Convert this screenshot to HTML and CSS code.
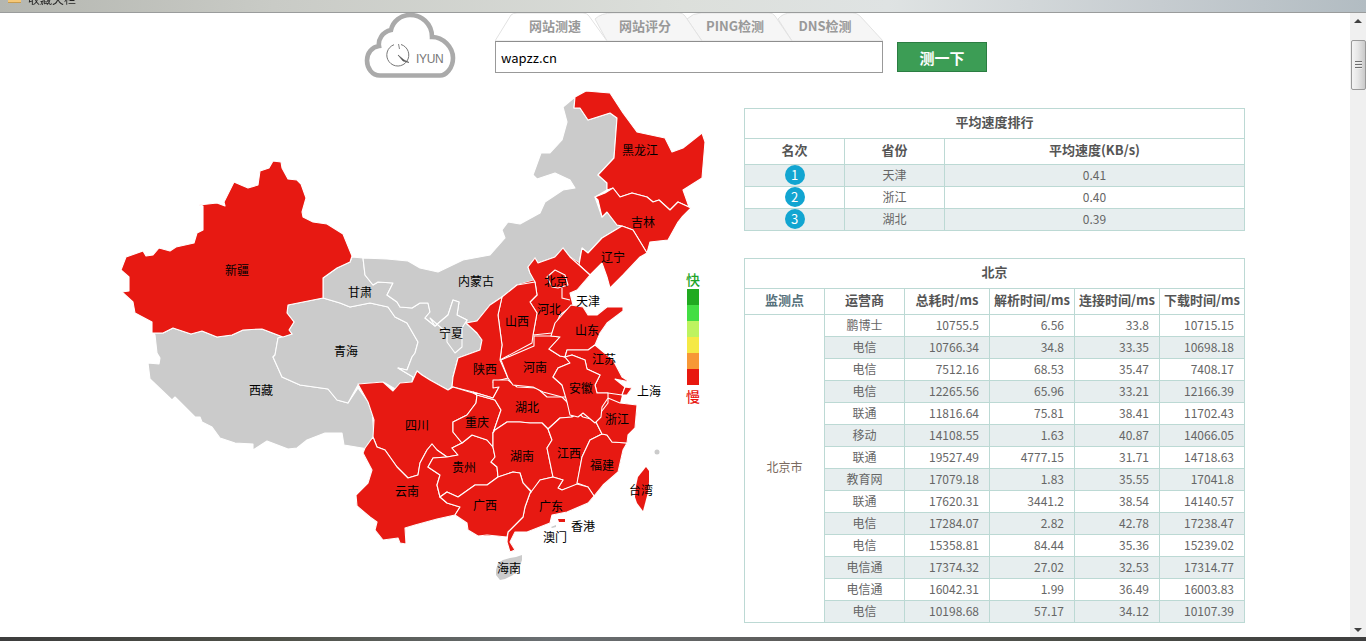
FILE: index.html
```html
<!DOCTYPE html>
<html lang="zh-CN">
<head>
<meta charset="utf-8">
<title>网站测速</title>
<link rel="stylesheet" href="styles.css">
</head>
<body>
<div class="titlebar">
  <span class="folder"></span>
  <span class="fav">收藏夹栏</span>
</div>
<div class="window">
  <main class="page">
    <header class="top">
      <svg class="logo" viewBox="360 10 100 72" width="100" height="72">
        <path class="cloud" d="M380,75.5 C372,75.5 367,68 367,60.5 C367,53 372,47 379,46 C378,40 382,32 391,30 C393,21 401,15 410,15 C421,15 432,23 432,37 C443,37 453,47 453,58 C453,68 446,75.5 440,75.5 Z"/>
        <path class="dial" d="M401,44.5 A11,11 0 1 1 394,44.7"/>
        <path class="tick" d="M398.5,44 L399.5,49"/>
        <path class="hand" d="M398,55 L404,60 L409,62.5 L403,61 Z"/>
        <text class="iyun" x="416" y="63">IYUN</text>
      </svg>
      <div class="search">
        <div class="tabs">
          <svg class="tabshape" viewBox="0 0 388 28" width="388" height="28">
            <path class="tabback" d="M297,28 L283,6 Q288,0 296,0 L358,0 Q362,0 365,3 L388,28 Z"/>
            <path class="tabback" d="M207,28 L192,6 Q198,0 206,0 L274,0 Q278,0 280,3 L297,28 Z"/>
            <path class="tabback" d="M112,28 L100,6 Q106,0 118,0 L184,0 Q188,0 190,3 L207,28 Z"/>
            <path class="tabfront" d="M0,28 L16,2 Q18,0 22,0 L88,0 Q92,0 94,3 L112,28 Z"/>
          </svg>
          <span class="tab">网站测速</span>
          <span class="tab">网站评分</span>
          <span class="tab">PING检测</span>
          <span class="tab">DNS检测</span>
        </div>
        <input class="url" type="text" value="wapzz.cn">
      </div>
      <button class="go" type="button">测一下</button>
    </header>
    <div class="content">
      <div class="mapbox">
        <svg class="map" viewBox="100 85 620 510" width="620" height="510">
          <g class="grey">
            <polygon points="153,333 163,333 173,328 191,334 202,331 217,337 232,335 243,330 262,329 283,337 278,338 275,355 273,357 282,377 300,385 328,389 337,400 348,403 358,388 372,407 374,437 368,449 344,445 342,433 325,433 307,440 297,448 288,449 267,441 253,450 253,444 235,443 220,438 212,427 202,422 200,417 195,417 175,397 172,400 150,379 148,363 159,364 160,358 157,353 155,335"/>
            <polygon points="288,305 323,298 340,303 350,307 370,303 388,307 395,317 407,323 418,342 415,353 412,357 407,370 398,368 413,377 412,383 405,383 397,390 385,383 358,385 348,403 337,400 328,389 300,385 282,377 273,357 275,355 278,338 292,334 289,330 294,322 287,313"/>
            <polygon points="352,257 363,258 365,275 373,285 378,282 393,283 387,295 397,302 400,307 412,308 420,303 428,303 430,312 425,318 435,326 448,315 453,300 459,302 457,315 467,320 466,323 477,333 482,340 480,350 458,358 453,377 452,387 448,390 430,380 422,375 417,371 412,382 413,377 398,368 407,370 412,357 415,353 418,342 407,323 395,317 388,307 370,303 350,307 340,303 323,298 323,278 337,268 350,262"/>
            <polygon points="575,97 563,107 567,122 562,140 550,153 541,153 533,175 537,179 555,173 570,180 575,188 563,190 545,202 540,213 520,224 508,222 502,230 505,238 490,255 463,260 438,272 420,268 408,261 387,259 363,258 365,275 373,285 378,282 393,283 387,295 397,302 400,307 412,308 420,303 428,303 430,312 425,318 435,326 448,315 453,300 459,302 457,315 467,320 466,323 477,321 490,305 502,297 517,285 535,280 530,273 528,267 535,258 538,263 555,257 563,248 570,257 579,263 582,248 588,253 602,238 622,226 617,225 607,212 602,217 595,197 607,190 607,183 598,175 614,158 617,118 610,113 588,120 580,108 574,108"/>
            <polygon points="430,318 435,326 448,315 453,300 459,302 457,315 467,320 462,328 462,347 455,353 447,342 447,333"/>
            <polygon class="isle" points="522,555 522,560 520,566 513,575 505,579 500,580 496,575 496,570 498,563 503,560 510,558 516,557"/>
            <polygon class="isle" points="551,527 556,525 556,527 552,528"/>
            <circle class="isle" cx="657" cy="452" r="2.5"/>
          </g>
          <g class="red">
            <polygon class="isle" points="502,297 517,285 535,280 528,267 535,258 538,263 555,257 563,248 570,257 579,263 590,275 577,290 570,293 573,305 571,305 583,307 588,315 597,315 607,307 623,307 623,311 607,323 600,333 595,345 613,360 622,377 630,382 615,379 625,387 632,388 627,395 622,395 620,403 637,405 635,428 628,435 627,443 623,450 618,472 603,485 594,496 588,503 567,512 552,515 550,523 527,532 515,532 510,542 515,550 510,552 507,542 507,537 497,536 478,536 468,530 467,523 455,515 437,519 415,525 405,528 406,544 400,543 398,538 383,540 375,530 377,522 370,517 357,506 356,495 368,483 372,470 363,453 365,448 373,437 374,420 368,402 358,384 383,382 393,391 400,383 412,382 417,371 422,375 430,380 448,390 453,387 453,377 458,358 480,350 482,340 477,333 466,323 477,321 490,305"/>
            <polygon points="273,161 281,162 282,168 288,179 297,180 301,184 306,198 302,212 303,217 313,222 327,224 343,234 352,256 350,262 337,268 323,278 323,298 288,305 287,313 294,322 289,330 292,334 283,337 262,329 243,330 232,335 217,337 202,331 191,334 173,328 163,333 152,333 152,322 135,313 133,302 122,292 129,291 129,277 121,270 126,257 143,251 146,256 153,255 159,248 170,251 176,247 194,243 197,233 203,230 203,206 199,205 217,203 225,206 224,202 234,182 248,188 258,185 260,171 269,168"/>
            <polygon points="575,97 586,91 610,93 623,113 637,132 665,138 672,152 683,148 702,133 705,142 702,178 683,190 689,207 678,202 670,210 659,200 653,202 647,197 632,193 620,197 613,188 607,190 607,183 598,175 614,158 617,118 610,113 588,120 580,108 574,108"/>
            <polygon points="595,197 605,193 613,188 620,197 632,193 647,197 653,202 659,200 670,210 678,202 691,208 682,217 678,222 668,240 650,242 647,253 633,230 622,226 617,225 607,212 602,217 598,200"/>
            <polygon points="622,226 633,230 647,253 640,257 623,275 610,288 607,277 602,263 590,275 579,265 582,248 588,253 602,238"/>
            <polygon points="535,258 538,263 555,257 563,248 570,257 579,265 590,275 577,290 570,293 573,305 560,315 552,333 533,335 537,313 530,302 537,295 535,282 530,273 528,267"/>
            <polygon points="547,277 555,270 565,275 568,285 558,288 552,287"/>
            <polygon points="502,297 517,285 535,282 537,295 530,302 537,313 533,335 532,343 500,360 502,345 498,315"/>
            <polygon points="502,297 498,315 502,345 500,360 508,378 493,382 499,387 493,398 473,392 453,387 452,387 453,377 458,358 480,350 482,340 477,333 466,323 477,321 490,305"/>
            <polygon points="358,384 383,382 393,391 400,383 412,382 417,371 422,375 430,380 448,390 453,387 473,393 477,395 476,403 467,415 453,422 453,432 462,443 452,448 458,455 447,457 437,450 432,444 427,450 420,463 418,475 408,478 397,467 385,450 377,447 373,437 374,420 368,402"/>
            <polygon points="373,437 377,447 385,450 397,467 408,478 418,475 420,463 427,450 432,444 437,450 447,457 433,458 428,467 440,475 437,485 440,497 447,503 460,507 455,515 437,519 415,525 405,528 406,544 400,543 398,538 383,540 375,530 377,522 370,517 357,506 356,495 368,483 372,470 363,453 365,448"/>
            <polygon points="462,443 472,435 487,440 493,447 495,457 491,462 497,467 498,477 487,485 475,485 458,497 447,492 440,497 437,485 440,475 428,467 433,458 447,457 458,455 452,448"/>
            <polygon points="477,395 495,400 501,410 493,433 493,447 487,440 472,435 462,443 453,432 453,422 467,415 476,403"/>
            <polygon points="493,388 493,380 508,380 517,387 537,388 547,397 562,397 568,403 572,417 560,418 548,429 542,423 530,423 520,422 507,422 495,430 493,433 501,410 495,400 477,395 473,392 493,398 499,387"/>
            <polygon points="493,433 495,430 507,422 520,422 530,423 542,423 548,429 552,440 547,448 553,477 540,480 532,492 523,483 520,473 513,472 498,477 497,467 491,462 495,457 493,447"/>
            <polygon points="548,429 560,418 572,417 578,413 583,417 595,420 602,434 590,440 582,457 577,485 562,490 558,488 563,480 553,477 547,448 552,440"/>
            <polygon points="602,434 607,435 612,442 627,443 623,450 618,472 603,485 594,496 588,487 577,483 582,457 590,440"/>
            <polygon points="595,420 608,403 608,398 620,403 637,405 635,428 628,435 627,443 612,442 607,435 602,434"/>
            <polygon points="531,492 540,480 553,477 563,480 558,488 562,490 577,484 588,487 594,496 588,503 567,512 552,515 550,523 527,532 515,532 510,542 515,550 510,552 507,542 508,532 523,517 525,507 530,493"/>
            <polygon points="440,497 447,492 458,497 475,485 487,485 498,477 513,472 520,473 523,483 531,492 530,493 525,507 523,517 508,532 507,537 497,536 487,535 478,536 468,530 467,523 455,515 460,507 447,503"/>
            <polygon points="501,360 534,346 534,336 551,336 560,337 549,349 560,356 565,357 570,363 558,368 553,377 562,385 567,397 562,397 543,392 533,387 513,385 508,378"/>
            <polygon points="571,305 583,307 588,315 597,315 607,307 623,307 623,311 607,323 600,333 595,345 588,350 567,350 565,357 560,356 549,349 560,337 551,336 555,323"/>
            <polygon points="565,357 567,350 588,350 595,345 613,360 622,377 630,382 615,379 625,387 622,395 608,393 597,393 595,385 600,375 587,369 585,360 572,355"/>
            <polygon points="570,363 565,357 572,355 585,360 587,369 600,375 595,385 597,393 608,393 608,398 602,407 601,417 595,423 583,413 578,417 570,415 567,402 562,385 553,377 558,368"/>
            <polygon points="622,395 625,387 632,388 627,395"/>
            <polygon class="isle" points="646,467 649,471 649,482 648,492 643,511 637,503 635,497 636,486 638,477"/>
            <polygon class="isle" points="558,519 565,519 565,522 559,522"/>
          </g>
          <polyline class="line" points="562,288 562,298 570,300"/>
          <g class="labels">
            <text x="237" y="274">新疆</text>
            <text x="360" y="296">甘肃</text>
            <text x="346" y="355">青海</text>
            <text x="261" y="394">西藏</text>
            <text x="476" y="285">内蒙古</text>
            <text x="640" y="154">黑龙江</text>
            <text x="643" y="226">吉林</text>
            <text x="613" y="261">辽宁</text>
            <text x="556" y="285">北京</text>
            <text x="588" y="305">天津</text>
            <text x="549" y="313">河北</text>
            <text x="517" y="325">山西</text>
            <text x="451" y="337">宁夏</text>
            <text x="587" y="334">山东</text>
            <text x="485" y="373">陕西</text>
            <text x="535" y="371">河南</text>
            <text x="604" y="363">江苏</text>
            <text x="649" y="395">上海</text>
            <text x="581" y="392">安徽</text>
            <text x="527" y="411">湖北</text>
            <text x="417" y="429">四川</text>
            <text x="477" y="426">重庆</text>
            <text x="617" y="423">浙江</text>
            <text x="522" y="460">湖南</text>
            <text x="569" y="457">江西</text>
            <text x="464" y="471">贵州</text>
            <text x="602" y="469">福建</text>
            <text x="641" y="494">台湾</text>
            <text x="407" y="495">云南</text>
            <text x="485" y="509">广西</text>
            <text x="551" y="510">广东</text>
            <text x="583" y="530">香港</text>
            <text x="555" y="541">澳门</text>
            <text x="509" y="572">海南</text>
          </g>
        </svg>
        <div class="legend">
          <span class="fast">快</span>
          <i class="lv lv1"></i><i class="lv lv2"></i><i class="lv lv3"></i><i class="lv lv4"></i><i class="lv lv5"></i><i class="lv lv6"></i>
          <span class="slow">慢</span>
        </div>
      </div>
      <div class="tables">
        <table class="rank">
          <colgroup><col class="c100"><col class="c100"><col></colgroup>
          <tr class="cap"><th colspan="3">平均速度排行</th></tr>
          <tr class="head"><th>名次</th><th>省份</th><th>平均速度(KB/s)</th></tr>
          <tr class="alt"><td class="place"><span class="num">1</span></td><td>天津</td><td>0.41</td></tr>
          <tr><td class="place"><span class="num">2</span></td><td>浙江</td><td>0.40</td></tr>
          <tr class="alt"><td class="place"><span class="num">3</span></td><td>湖北</td><td>0.39</td></tr>
        </table>
        <table class="detail">
          <colgroup><col class="c80"><col class="c80"><col class="c85"><col class="c85"><col class="c85"><col></colgroup>
          <tr class="cap"><th colspan="6">北京</th></tr>
          <tr class="head"><th class="teal">监测点</th><th>运营商</th><th>总耗时/ms</th><th>解析时间/ms</th><th>连接时间/ms</th><th>下载时间/ms</th></tr>
          <tr><td class="city" rowspan="14">北京市</td><td>鹏博士</td><td>10755.5</td><td>6.56</td><td>33.8</td><td>10715.15</td></tr>
          <tr class="alt"><td>电信</td><td>10766.34</td><td>34.8</td><td>33.35</td><td>10698.18</td></tr>
          <tr><td>电信</td><td>7512.16</td><td>68.53</td><td>35.47</td><td>7408.17</td></tr>
          <tr class="alt"><td>电信</td><td>12265.56</td><td>65.96</td><td>33.21</td><td>12166.39</td></tr>
          <tr><td>联通</td><td>11816.64</td><td>75.81</td><td>38.41</td><td>11702.43</td></tr>
          <tr class="alt"><td>移动</td><td>14108.55</td><td>1.63</td><td>40.87</td><td>14066.05</td></tr>
          <tr><td>联通</td><td>19527.49</td><td>4777.15</td><td>31.71</td><td>14718.63</td></tr>
          <tr class="alt"><td>教育网</td><td>17079.18</td><td>1.83</td><td>35.55</td><td>17041.8</td></tr>
          <tr><td>联通</td><td>17620.31</td><td>3441.2</td><td>38.54</td><td>14140.57</td></tr>
          <tr class="alt"><td>电信</td><td>17284.07</td><td>2.82</td><td>42.78</td><td>17238.47</td></tr>
          <tr><td>电信</td><td>15358.81</td><td>84.44</td><td>35.36</td><td>15239.02</td></tr>
          <tr class="alt"><td>电信通</td><td>17374.32</td><td>27.02</td><td>32.53</td><td>17314.77</td></tr>
          <tr><td>电信通</td><td>16042.31</td><td>1.99</td><td>36.49</td><td>16003.83</td></tr>
          <tr class="alt"><td>电信</td><td>10198.68</td><td>57.17</td><td>34.12</td><td>10107.39</td></tr>
        </table>
      </div>
    </div>
  </main>
  <aside class="scrollbar">
    <span class="arrow up"></span>
    <span class="thumb"><i></i><i></i><i></i></span>
    <span class="spacer"></span>
    <span class="arrow down"></span>
  </aside>
</div>
<div class="taskstrip"></div>
</body>
</html>
```
FILE: styles.css
```css
* { box-sizing: border-box; }
html, body { margin: 0; height: 641px; overflow: hidden; background: #fff; }
body {
  display: flex;
  flex-direction: column;
  font-family: "Noto Sans CJK SC", "Liberation Sans", sans-serif;
  font-size: 12px;
  color: #666;
}

.titlebar {
  height: 13px;
  flex: none;
  display: flex;
  align-items: flex-end;
  padding: 0 0 6px 8px;
  overflow: hidden;
  border-bottom: 1px solid #9a9c9c;
  background: linear-gradient(90deg, #b4b6b0 0, #c9cbc6 20%, #dcdfdb 50%, #dfe3e3 65%, #c6ccd0 85%, #b2bcc2 100%);
}
.folder {
  width: 13px;
  height: 13px;
  flex: none;
  margin-bottom: 3px;
  background: #f5c878;
  border-bottom: 1px solid #c79c50;
}
.fav { margin-left: 7px; font-size: 12px; line-height: 14px; color: #222; filter: blur(.4px); white-space: nowrap; }

.window { flex: 1; min-height: 0; display: flex; }
.page { flex: 1; min-width: 0; overflow: hidden; }

.top { display: flex; align-items: flex-start; height: 72px; padding-left: 360px; }
.logo { display: block; flex: none; margin-top: -3px; }
.cloud { fill: none; stroke: #aaa; stroke-width: 4.6; }
.dial { fill: none; stroke: #777; stroke-width: 1; }
.tick { fill: none; stroke: #888; stroke-width: 1; }
.hand { fill: #555; stroke: #555; stroke-width: .6; }
.iyun { font-family: "Liberation Sans", sans-serif; font-size: 12px; letter-spacing: -.3px; fill: #777; }

.search { width: 388px; margin-left: 35px; flex: none; }
.tabs { position: relative; display: flex; height: 28px; padding-left: 15px; }
.tabshape { position: absolute; left: 0; top: 0; }
.tabback { fill: #f6f6f6; stroke: #e2e2e2; }
.tabfront { fill: #fff; stroke: #e2e2e2; }
.tab {
  position: relative;
  width: 90px;
  text-align: center;
  font-size: 13px;
  font-weight: 700;
  line-height: 26px;
  color: #999;
  white-space: nowrap;
}
.url {
  display: block;
  width: 388px;
  height: 32px;
  padding: 0 5px;
  border: 1px solid #999;
  border-top-color: #8e8e8e;
  background: #fff;
  color: #000;
  font-family: "Noto Sans CJK SC", sans-serif;
  font-size: 13px;
  outline: 0;
  border-radius: 0;
}
.go {
  width: 90px;
  height: 30px;
  margin: 29px 0 0 14px;
  flex: none;
  border: 1px solid #2b7d42;
  border-radius: 0;
  background: #3c9d55;
  color: #fff;
  font-family: "Noto Sans CJK SC", sans-serif;
  font-size: 15px;
  font-weight: 700;
  padding: 0;
}

.content { display: flex; align-items: flex-start; padding-left: 100px; }
.mapbox { position: relative; width: 620px; height: 510px; flex: none; }
.map { display: block; }
.map polygon, .map circle { stroke: #fff; stroke-width: 1.1; stroke-linejoin: round; }
.map .isle { stroke: none; }
.grey { fill: #cbcbcb; }
.red { fill: #e71912; }
.line { fill: none; stroke: #fff; stroke-width: 1.1; }
.labels { transform: translateY(1px); }
.labels text { font-size: 12px; fill: #000; text-anchor: middle; }

.legend {
  position: absolute;
  left: 585px;
  top: 184px;
  width: 16px;
  display: flex;
  flex-direction: column;
  align-items: center;
}
.fast, .slow { font-size: 14px; line-height: 20px; font-weight: 500; }
.fast { color: #1fa52a; }
.slow { color: #e8170f; margin-top: 1px; }
.lv { display: block; width: 12px; height: 16px; }
.lv1 { background: #21aa20; }
.lv2 { background: #43de43; }
.lv3 { background: #bdf35f; }
.lv4 { background: #f5e945; }
.lv5 { background: #f79836; }
.lv6 { background: #e8180f; }

.tables { width: 501px; margin: 23px 0 0 24px; flex: none; }
table {
  width: 501px;
  table-layout: fixed;
  border-collapse: collapse;
  border: 1px solid #bcd9d4;
  background: #fff;
}
.rank { margin-bottom: 27px; }
.c100 { width: 100px; }
.c80 { width: 80px; }
.c85 { width: 85px; }
th, td { border: 1px solid #bcd9d4; padding: 0; text-align: center; overflow: hidden; white-space: nowrap; }
th { font-size: 13px; font-weight: 700; color: #555; padding-bottom: 4px; line-height: 18px; }
.cap { height: 30px; }
.head { height: 26px; }
.rank td, .detail td { height: 22px; line-height: 18px; padding-bottom: 2px; font-size: 12px; color: #666; }
.alt td { background: #e7eeef; }
.detail td:nth-last-child(-n+4) { text-align: right; padding-right: 10px; }
.detail td.city { text-align: center; padding: 0 0 4px; background: #fff; color: #7a6a60; }
.rank td.place { padding: 0; vertical-align: top; }
.teal { color: #55707a; }
.num {
  display: block;
  width: 20px;
  height: 20px;
  margin: 0 auto;
  border-radius: 50%;
  background: #12a5d1;
  color: #fff;
  font-size: 13px;
  line-height: 19px;
}

.scrollbar {
  width: 16px;
  flex: none;
  display: flex;
  flex-direction: column;
  align-items: center;
  background: #f0f0f0;
}
.arrow { width: 0; height: 0; flex: none; border-left: 4px solid transparent; border-right: 4px solid transparent; }
.up { margin: 6px 0 17px; border-bottom: 4px solid #404040; }
.down { margin: 0 0 5px; border-top: 4px solid #404040; }
.thumb {
  width: 15px;
  height: 50px;
  flex: none;
  display: flex;
  flex-direction: column;
  align-items: center;
  justify-content: center;
  gap: 1px;
  border: 1px solid #999;
  border-radius: 2px;
  background: linear-gradient(90deg, #f4f4f4 0, #e6e6e6 45%, #c9c9c9 100%);
}
.thumb i { display: block; width: 7px; height: 2px; background: #6f6f6f; border-bottom: 1px solid #eee; }
.spacer { flex: 1; }

.taskstrip {
  height: 4px;
  flex: none;
  background: linear-gradient(90deg, #3d3d3d 0, #4f5148 20%, #6a6f72 40%, #5b5a58 60%, #4a4d46 80%, #3f3f3f 100%);
}
```
